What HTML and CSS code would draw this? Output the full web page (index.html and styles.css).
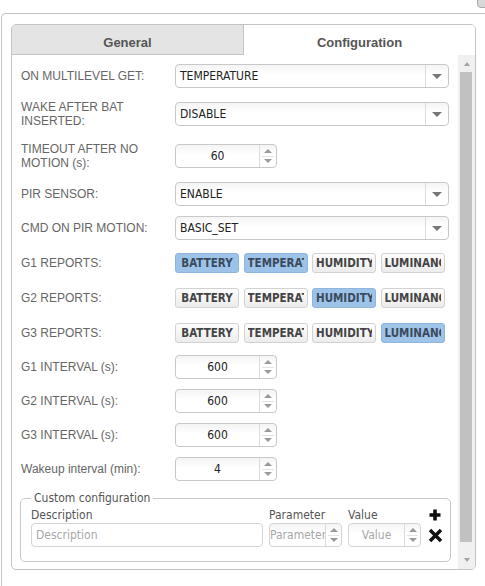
FILE: index.html
```html
<!DOCTYPE html>
<html>
<head>
<meta charset="utf-8">
<link rel="stylesheet" href="styles.css">
</head>
<body>
<div class="close"></div>
<div class="window">
  <div class="tabpanel">
    <div class="tabs">
      <div class="tab tab-inactive">General</div>
      <div class="tab tab-active">Configuration</div>
    </div>
    <div class="pane">
      <div class="form">
        <div class="row">
          <div class="label">ON MULTILEVEL GET:</div>
          <div class="select"><div class="select-value">TEMPERATURE</div><div class="select-arrow"><span class="tri-down"></span></div></div>
        </div>
        <div class="row">
          <div class="label">WAKE AFTER BAT INSERTED:</div>
          <div class="select"><div class="select-value">DISABLE</div><div class="select-arrow"><span class="tri-down"></span></div></div>
        </div>
        <div class="row">
          <div class="label">TIMEOUT AFTER NO MOTION (s):</div>
          <div class="spin"><div class="spin-value">60</div><div class="spin-btns"><span class="sb-btn"><span class="tri-up-s"></span></span><span class="sb-btn"><span class="tri-down-s"></span></span></div></div>
        </div>
        <div class="row">
          <div class="label">PIR SENSOR:</div>
          <div class="select"><div class="select-value">ENABLE</div><div class="select-arrow"><span class="tri-down"></span></div></div>
        </div>
        <div class="row">
          <div class="label">CMD ON PIR MOTION:</div>
          <div class="select"><div class="select-value">BASIC_SET</div><div class="select-arrow"><span class="tri-down"></span></div></div>
        </div>
        <div class="row row-toggles">
          <div class="label">G1 REPORTS:</div>
          <div class="toggles">
            <div class="tog on"><span>BATTERY</span></div><div class="tog on"><span>TEMPERATURE</span></div><div class="tog"><span>HUMIDITY</span></div><div class="tog"><span>LUMINANCE</span></div>
          </div>
        </div>
        <div class="row row-toggles">
          <div class="label">G2 REPORTS:</div>
          <div class="toggles">
            <div class="tog"><span>BATTERY</span></div><div class="tog"><span>TEMPERATURE</span></div><div class="tog on"><span>HUMIDITY</span></div><div class="tog"><span>LUMINANCE</span></div>
          </div>
        </div>
        <div class="row row-toggles">
          <div class="label">G3 REPORTS:</div>
          <div class="toggles">
            <div class="tog"><span>BATTERY</span></div><div class="tog"><span>TEMPERATURE</span></div><div class="tog"><span>HUMIDITY</span></div><div class="tog on"><span>LUMINANCE</span></div>
          </div>
        </div>
        <div class="row">
          <div class="label">G1 INTERVAL (s):</div>
          <div class="spin"><div class="spin-value">600</div><div class="spin-btns"><span class="sb-btn"><span class="tri-up-s"></span></span><span class="sb-btn"><span class="tri-down-s"></span></span></div></div>
        </div>
        <div class="row">
          <div class="label">G2 INTERVAL (s):</div>
          <div class="spin"><div class="spin-value">600</div><div class="spin-btns"><span class="sb-btn"><span class="tri-up-s"></span></span><span class="sb-btn"><span class="tri-down-s"></span></span></div></div>
        </div>
        <div class="row">
          <div class="label">G3 INTERVAL (s):</div>
          <div class="spin"><div class="spin-value">600</div><div class="spin-btns"><span class="sb-btn"><span class="tri-up-s"></span></span><span class="sb-btn"><span class="tri-down-s"></span></span></div></div>
        </div>
        <div class="row">
          <div class="label">Wakeup interval (min):</div>
          <div class="spin"><div class="spin-value">4</div><div class="spin-btns"><span class="sb-btn"><span class="tri-up-s"></span></span><span class="sb-btn"><span class="tri-down-s"></span></span></div></div>
        </div>
        <fieldset class="custom">
          <legend>Custom configuration</legend>
          <div class="custom-grid">
            <span class="clabel">Description</span>
            <span class="clabel">Parameter</span>
            <span class="clabel">Value</span>
            <span class="icon">
              <svg width="14" height="14" viewBox="0 0 14 14"><path d="M7 1.5V12.5M1.5 7H12.5" stroke="#111" stroke-width="3.6" fill="none"/></svg>
            </span>
            <div class="field ph">Description</div>
            <div class="spin small"><div class="spin-value ph">Parameter</div><div class="spin-btns"><span class="sb-btn"><span class="tri-up-s"></span></span><span class="sb-btn"><span class="tri-down-s"></span></span></div></div>
            <div class="spin small"><div class="spin-value ph">Value</div><div class="spin-btns"><span class="sb-btn"><span class="tri-up-s"></span></span><span class="sb-btn"><span class="tri-down-s"></span></span></div></div>
            <span class="icon">
              <svg width="15" height="15" viewBox="0 0 15 15"><path d="M2 2L13 13M13 2L2 13" stroke="#111" stroke-width="3.4" fill="none"/></svg>
            </span>
          </div>
        </fieldset>
      </div>
      <div class="scrollbar">
        <div class="sbar-up"><span class="tri-sb-up"></span></div>
        <div class="sbar-thumb"></div>
        <div class="sbar-down"><span class="tri-sb-down"></span></div>
      </div>
    </div>
  </div>
</div>
</body>
</html>
```

FILE: styles.css
```css
html, body {
  margin: 0;
  padding: 0;
}
body {
  width: 485px;
  height: 586px;
  overflow: hidden;
  background: #fff;
  font-family: "Liberation Sans", Arial, sans-serif;
  position: relative;
}
.close {
  position: absolute;
  left: 477px;
  top: -8px;
  width: 14px;
  height: 14px;
  border-radius: 4px;
  background: #d8d8d8;
  border: 1px solid #aaa;
}
.window {
  margin: 13px 0 0 1px;
  width: 484px;
  height: 573px;
  box-sizing: border-box;
  border: 1px solid #c4c4c4;
  border-right: none;
  border-bottom: none;
  border-top-left-radius: 5px;
  padding: 10px 0 0 9px;
  overflow: hidden;
}
.tabpanel {
  width: 465px;
  height: 546px;
  box-sizing: border-box;
  border: 1px solid #c4c4c4;
  border-radius: 5px;
  overflow: hidden;
  display: flex;
  flex-direction: column;
}
.tabs {
  display: flex;
  height: 30px;
  flex: none;
}
.tab {
  flex: 1;
  box-sizing: border-box;
  text-align: center;
  font-weight: bold;
  font-size: 13px;
  color: #555;
  padding-top: 10px;
  line-height: 15px;
}
.tab-inactive {
  background: #e4e4e4;
  border-right: 1px solid #c4c4c4;
  border-bottom: 1px solid #c4c4c4;
}
.tab-active {
  background: #fff;
}
.pane {
  flex: 1;
  display: flex;
  min-height: 0;
}
.form {
  flex: 1;
  padding: 4px 0 0 9px;
}
.row {
  display: flex;
  align-items: center;
  min-height: 24px;
  padding: 5px 0;
}
.row-toggles {
  min-height: 25px;
}
.label {
  width: 150px;
  padding: 2px 4px 2px 0;
  flex: none;
  font-size: 12px;
  line-height: 14px;
  color: #666;
}
.select {
  width: 274px;
  height: 24px;
  box-sizing: border-box;
  border: 1px solid #c8c8c8;
  border-radius: 4px;
  display: flex;
  background: linear-gradient(#f4f4f4, #fff 45%);
}
.select-value, .spin-value, .field, .clabel, legend, .tog {
  font-family: "DejaVu Sans Condensed", "DejaVu Sans", sans-serif;
  font-stretch: condensed;
}
.select-value {
  flex: 1;
  padding-left: 4px;
  font-size: 12px;
  line-height: 22px;
  color: #222;
}
.select-arrow {
  width: 22px;
  border-left: 1px solid #dcdcdc;
  display: flex;
  align-items: center;
  justify-content: center;
}
.tri-down {
  width: 0;
  height: 0;
  border-left: 5px solid transparent;
  border-right: 5px solid transparent;
  border-top: 5px solid #777;
  margin-top: 1px;
}
.spin {
  width: 102px;
  height: 24px;
  box-sizing: border-box;
  border: 1px solid #c8c8c8;
  border-radius: 4px;
  display: flex;
  background: linear-gradient(#f4f4f4, #fff 45%);
}
.spin-value {
  flex: 1;
  min-width: 0;
  overflow: hidden;
  white-space: nowrap;
  text-align: center;
  font-size: 12px;
  line-height: 22px;
  color: #222;
}
.spin-btns {
  width: 17px;
  border-left: 1px solid #dcdcdc;
  display: flex;
  flex-direction: column;
  padding: 1px 0;
  box-sizing: border-box;
}
.sb-btn {
  flex: 1;
  display: flex;
  align-items: center;
  justify-content: center;
}
.sb-btn + .sb-btn {
  border-top: 1px solid #e2e2e2;
  margin: 0 2px;
}
.tri-up-s, .tri-down-s {
  width: 0;
  height: 0;
  border-left: 4px solid transparent;
  border-right: 4px solid transparent;
}
.tri-up-s { border-bottom: 4px solid #9a9a9a; }
.tri-down-s { border-top: 4px solid #9a9a9a; }
.toggles {
  display: flex;
  gap: 4.5px;
}
.tog {
  width: 64px;
  height: 20px;
  box-sizing: border-box;
  border: 1px solid #d2d2d2;
  border-radius: 3px;
  background: linear-gradient(#fdfdfd, #ececec);
  font-size: 11.5px;
  font-weight: bold;
  line-height: 18px;
  color: #444;
  text-align: center;
  white-space: nowrap;
  overflow: hidden;
  padding: 0 3px;
}
.tog span {
  display: block;
  overflow: hidden;
  text-overflow: clip;
}
.tog.on {
  background: #9ec3e9;
  border-color: #8fb6de;
  color: #3a4a5c;
}
.custom {
  margin: 5px 0 0 -1px;
  width: 431px;
  box-sizing: border-box;
  border: 1px solid #c8c8c8;
  border-radius: 5px;
  padding: 3px 0 14px 10px;
}
legend {
  padding: 0 3px;
  font-size: 12px;
  line-height: 14px;
  color: #555;
}
.custom-grid {
  display: grid;
  grid-template-columns: 232px 73px 73px 16px;
  column-gap: 6px;
  row-gap: 1px;
  align-items: center;
}
.clabel {
  font-size: 12px;
  line-height: 14px;
  color: #555;
}
.field {
  height: 24px;
  box-sizing: border-box;
  border: 1px solid #d4d4d4;
  border-radius: 4px;
  padding-left: 4px;
  font-size: 12px;
  line-height: 22px;
}
.ph {
  color: #a8a8a8;
}
.spin.small {
  width: 73px;
  border-color: #d4d4d4;
}
.spin.small .spin-btns {
  width: 16px;
}
.icon {
  display: flex;
  justify-content: center;
}
.scrollbar {
  width: 17px;
  flex: none;
  background: #f0f0f0;
  display: flex;
  flex-direction: column;
}
.sbar-up {
  height: 17px;
  display: flex;
  justify-content: center;
  padding-top: 7px;
  box-sizing: border-box;
}
.sbar-thumb {
  height: 470px;
  margin: 0 3px 0 2px;
  background: #c1c1c1;
}
.sbar-down {
  flex: 1;
  display: flex;
  justify-content: center;
  align-items: flex-end;
  padding-bottom: 7px;
}
.tri-sb-up, .tri-sb-down {
  width: 0;
  height: 0;
  border-left: 3.5px solid transparent;
  border-right: 3.5px solid transparent;
}
.tri-sb-up { border-bottom: 4px solid #a3a3a3; }
.tri-sb-down { border-top: 4px solid #a3a3a3; }
```
